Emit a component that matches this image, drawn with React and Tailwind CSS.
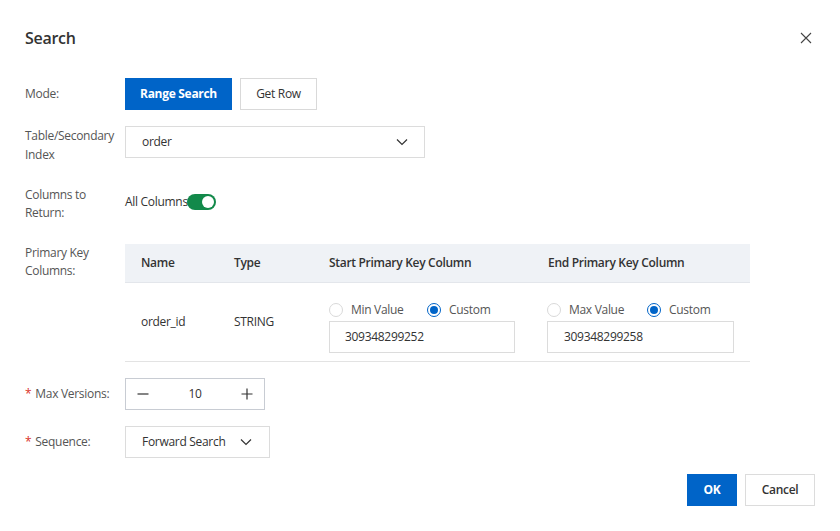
import React from "react";

function Chevron({ className = "" }) {
  return (
    <svg width="14" height="14" viewBox="0 0 14 14" className={className} fill="none">
      <path d="M2 4.5 L7 9.5 L12 4.5" stroke="#333" strokeWidth="1.2" />
    </svg>
  );
}

function Radio({ checked }) {
  return checked ? (
    <span className="flex h-[14px] w-[14px] shrink-0 items-center justify-center rounded-full border border-[#0064c8] bg-white">
      <span className="h-[8px] w-[8px] rounded-full bg-[#0064c8]" />
    </span>
  ) : (
    <span className="h-[14px] w-[14px] shrink-0 rounded-full border border-[#d9d9d9] bg-white" />
  );
}

function RadioPair({ first, firstWidth }) {
  return (
    <div className="flex h-[18px] items-center">
      <Radio checked={false} />
      <span className={`ml-[8px] text-[#555] ${firstWidth}`}>{first}</span>
      <Radio checked />
      <span className="ml-[8px] text-[#555]">Custom</span>
    </div>
  );
}

function Label({ children, required }) {
  return (
    <div className="w-[100px] shrink-0 leading-[18px] text-[#555]">
      {required && <span className="mr-[4px] text-[#d93026]">*</span>}
      {children}
    </div>
  );
}

export default function App() {
  return (
    <div
      className="relative h-[531px] w-[840px] overflow-hidden bg-white text-[12px] tracking-[-0.3px] text-[#333]"
      style={{ fontFamily: '"Open Sans", "Noto Sans", sans-serif' }}
    >
      <div className="flex items-center justify-between pl-[25px] pr-[26px] pt-[27px]">
        <div className="text-[16px] font-semibold leading-[22px] text-[#333]">Search</div>
        <svg width="12" height="12" viewBox="0 0 12 12" className="mr-[2px]">
          <path d="M1 1 L11 11 M11 1 L1 11" stroke="#444" strokeWidth="1.1" />
        </svg>
      </div>

      <div className="pl-[25px] pr-[25px]">
        {/* Mode */}
        <div className="mt-[28px] flex h-[32px] items-center pt-[1px]">
          <Label>Mode:</Label>
          <div className="flex gap-[8px]">
            <div className="flex h-[32px] w-[107px] items-center justify-center bg-[#0064c8] font-bold text-white">
              Range Search
            </div>
            <div className="flex h-[32px] w-[77px] items-center justify-center border border-[#d9d9d9] text-[#333]">
              Get Row
            </div>
          </div>
        </div>

        {/* Table */}
        <div className="mt-[17px] flex items-start">
          <div className="w-[100px] shrink-0 leading-[19px] text-[#555]">
            Table/Secondary
            <br />
            Index
          </div>
          <div className="flex h-[32px] w-[300px] items-center justify-between border border-[#dcdcdc] pl-[16px] pr-[15px]">
            <span>order</span>
            <Chevron />
          </div>
        </div>

        {/* Columns */}
        <div className="mt-[22px] flex items-start">
          <Label>
            Columns to
            <br />
            Return:
          </Label>
          <div className="flex h-[32px] items-center">
            <span className="text-[#333]">All Columns</span>
            <span className="ml-[-1px] flex h-[16px] w-[29px] items-center justify-end rounded-full bg-[#12894a] pr-[2px]">
              <span className="h-[12px] w-[12px] rounded-full bg-white" />
            </span>
          </div>
        </div>

        {/* Primary key */}
        <div className="mt-[22px] flex items-start">
          <Label>
            Primary Key
            <br />
            Columns:
          </Label>
          <div className="w-[625px]">
            <div className="grid h-[39px] grid-cols-[93px_95px_219px_218px] items-center border-b border-[#e3e6eb] bg-[#eff2f6] font-semibold text-[#333]">
              <div className="pl-[16px]">Name</div>
              <div className="pl-[16px]">Type</div>
              <div className="pl-[16px]">Start Primary Key Column</div>
              <div className="pl-[16px]">End Primary Key Column</div>
            </div>
            <div className="grid h-[79px] grid-cols-[93px_95px_219px_218px] items-center border-b border-[#e3e3e3]">
              <div className="pl-[16px]">order_id</div>
              <div className="pl-[16px]">STRING</div>
              <div className="flex flex-col gap-[2px] pl-[16px] pt-[10px]">
                <RadioPair first="Min Value" firstWidth="w-[76px]" />
                <div className="flex h-[32px] w-[186px] items-center border border-[#dcdcdc] pl-[15px]">
                  309348299252
                </div>
              </div>
              <div className="flex flex-col gap-[2px] pl-[15px] pt-[10px]">
                <RadioPair first="Max Value" firstWidth="w-[78px]" />
                <div className="flex h-[32px] w-[187px] items-center border border-[#dcdcdc] pl-[16px]">
                  309348299258
                </div>
              </div>
            </div>
          </div>
        </div>

        {/* Max versions */}
        <div className="mt-[16px] flex h-[32px] items-center">
          <Label required>Max Versions:</Label>
          <div className="flex h-[32px] w-[140px] items-center justify-between border border-[#c8ccd3] px-[10px]">
            <svg width="14" height="14" viewBox="0 0 14 14">
              <path d="M1.5 7 H12.5" stroke="#333" strokeWidth="1.2" />
            </svg>
            <span>10</span>
            <svg width="14" height="14" viewBox="0 0 14 14">
              <path d="M1.5 7 H12.5 M7 1.5 V12.5" stroke="#333" strokeWidth="1.2" />
            </svg>
          </div>
        </div>

        {/* Sequence */}
        <div className="mt-[16px] flex h-[32px] items-center">
          <Label required>Sequence:</Label>
          <div className="flex h-[32px] w-[145px] items-center justify-between border border-[#dcdcdc] pl-[16px] pr-[16px]">
            <span>Forward Search</span>
            <Chevron />
          </div>
        </div>

        {/* Footer */}
        <div className="mt-[16px] flex justify-end gap-[8px]">
          <div className="flex h-[32px] w-[50px] items-center justify-center bg-[#0064c8] font-bold text-white">
            OK
          </div>
          <div className="flex h-[32px] w-[70px] items-center justify-center border border-[#dcdcdc] font-semibold text-[#333]">
            Cancel
          </div>
        </div>
      </div>
    </div>
  );
}
